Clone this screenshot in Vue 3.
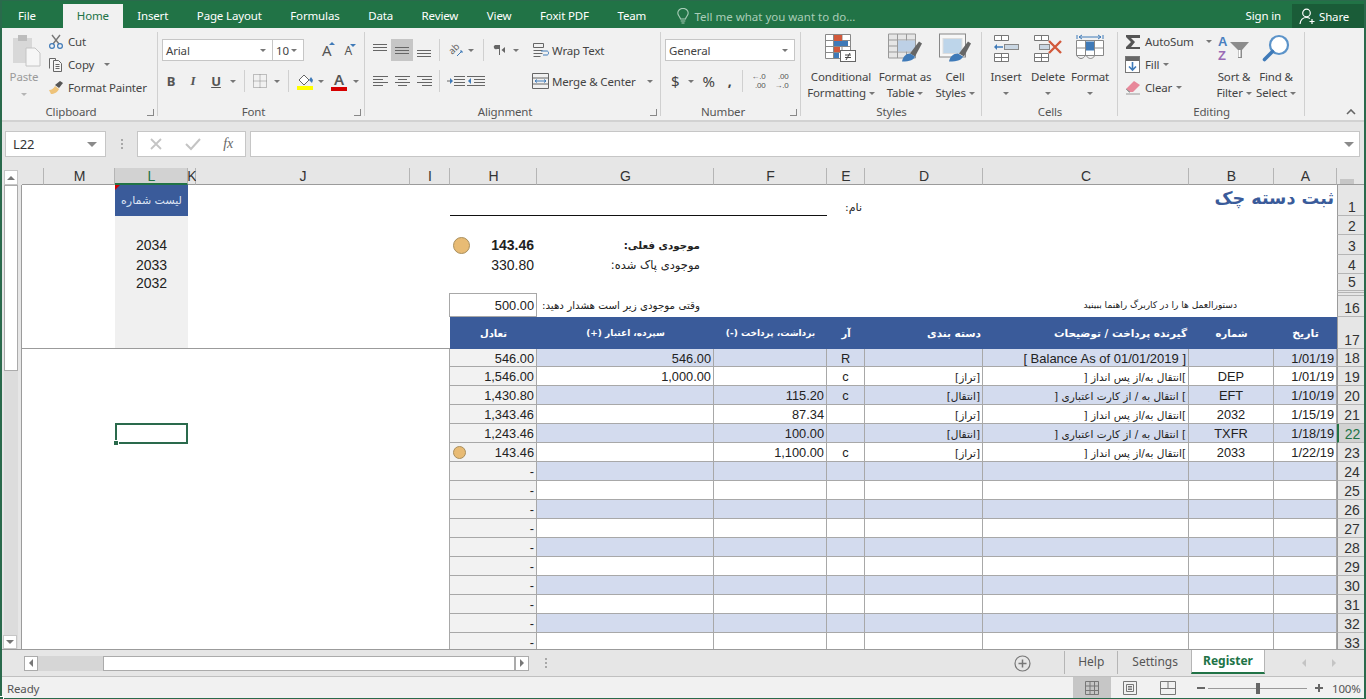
<template>
  <div class="excel">
    <header class="tabbar">
      <span
        v-for="t in tabs"
        :key="t"
        class="tab"
        :class="{ active: t === 'Home', file: t === 'File' }"
      >{{ t }}</span>
      <span class="tell">
        <svg width="12" height="17" viewBox="0 0 12 17" fill="none" stroke="#a9cdb8" stroke-width="1.1">
          <path d="M3.5 11C3 8.5.8 7.5.8 5a5.2 4.6 0 0 1 10.4 0c0 2.5-2.2 3.5-2.7 6zM3.7 13h4.6M4.5 15h3" />
        </svg>
        Tell me what you want to do...
      </span>
      <span class="signin">Sign in</span>
      <span class="share">
        <svg width="17" height="17" viewBox="0 0 17 17" fill="none" stroke="#fff" stroke-width="1.2">
          <circle cx="7.5" cy="5" r="3.8" />
          <path d="M1 16c.5-4 3-6.5 6.5-6.5 1.4 0 2.5.4 3.4 1M10.5 13.5h5M13 11v5" />
        </svg>
        Share
      </span>
    </header>

    <section class="ribbon">
      <!-- Clipboard -->
      <div class="group g-clip">
        <div class="body">
          <div class="paste">
            <svg width="30" height="33" viewBox="0 0 30 33">
              <rect x="1" y="4" width="19" height="25" fill="#d8d8d8" />
              <rect x="6" y="1" width="9" height="6" fill="#bdbdbd" />
              <path d="M14 14h9l5 5v13H14z" fill="#f6f6f6" stroke="#c4c4c4" />
            </svg>
            <span>Paste</span>
            <i class="caret dim" />
          </div>
          <div class="stack">
            <div class="tool">
              <svg width="16" height="15" viewBox="0 0 16 15" fill="none">
                <path d="M4 1l7 9M12 1L5 10" stroke="#777" stroke-width="1.4" />
                <circle cx="4" cy="12" r="2.4" stroke="#3f7ab8" stroke-width="1.2" />
                <circle cx="12" cy="12" r="2.4" stroke="#3f7ab8" stroke-width="1.2" />
              </svg>
              Cut
            </div>
            <div class="tool">
              <svg width="16" height="15" viewBox="0 0 16 15" fill="none" stroke="#666">
                <path d="M1.5 11.5v-10h6v2M5.5 3.5h5l3 3v8h-8z" fill="#f6f6f6" />
                <path d="M7.5 7.5h4M7.5 9.5h4M7.5 11.5h4" />
              </svg>
              Copy <i class="caret copy-caret" />
            </div>
            <div class="tool">
              <svg width="16" height="15" viewBox="0 0 16 15">
                <path d="M1 10c3 0 5-2 6-4l4 3c-1 3-5 5-8 5z" fill="#eec37a" />
                <path d="M7 5l5-4 3 2-4 5z" fill="#555" />
              </svg>
              Format Painter
            </div>
          </div>
        </div>
        <div class="glabel launchable">Clipboard<i class="launch" /></div>
      </div>

      <!-- Font -->
      <div class="group g-font">
        <div class="body two">
          <div class="trow">
            <div class="select fontname">Arial<i class="caret" /></div>
            <div class="select fontsize">10<i class="caret" /></div>
            <span class="growa big-a">A<i class="mini up" /></span>
            <span class="growa small-a">A<i class="mini down" /></span>
          </div>
          <div class="trow">
            <span class="ib fb">B</span>
            <span class="ib fi">I</span>
            <span class="ib fu">U</span>
            <i class="caret gap-r" />
            <i class="sep s-a" />
            <svg width="14" height="14" viewBox="0 0 14 14" fill="none" stroke="#888" stroke-dasharray="1 1">
              <path d="M.5.500h13v13H.5zM7 .5v13M.5 7h13" />
            </svg>
            <i class="caret c-border" />
            <i class="sep s-b" />
            <svg class="fill-ic" width="17" height="18" viewBox="0 0 17 18">
              <path d="M2 8l5-5 5 5-5 5z" fill="#fff" stroke="#666" />
              <path d="M12 8l3 3 1-3-2-3z" fill="#3f7ab8" />
              <rect y="14" width="16" height="4" fill="#ffff00" />
            </svg>
            <i class="caret c-fill" />
            <span class="color-a">A</span>
            <i class="caret c-color" />
          </div>
        </div>
        <div class="glabel launchable">Font<i class="launch" /></div>
      </div>

      <!-- Alignment -->
      <div class="group g-align">
        <div class="body">
          <div class="two alcol">
            <div class="trow">
              <span class="ab"><svg width="14" height="14" viewBox="0 0 14 14" stroke="#666"><path d="M0 1.500h14M0 4.500h14M0 7.500h14" /></svg></span>
              <span class="ab on"><svg width="14" height="14" viewBox="0 0 14 14" stroke="#666"><path d="M0 4.500h14M0 7.500h14M0 10.500h14" /></svg></span>
              <span class="ab"><svg width="14" height="14" viewBox="0 0 14 14" stroke="#666"><path d="M0 7.500h14M0 10.500h14M0 13.500h14" /></svg></span>
              <i class="sep s-c" />
              <svg class="orient" width="16" height="16" viewBox="0 0 16 16">
                <text x="2" y="11" transform="rotate(-45 6 8)" class="orient-t">ab</text>
                <path d="M10 14l5-5M13 9h2v2" stroke="#3f7ab8" fill="none" />
              </svg>
              <i class="caret c-or" />
              <i class="sep s-d" />
              <svg class="pil" width="13" height="12" viewBox="0 0 13 12">
                <path d="M2 1h5v10H6V5H4a2 2 0 0 1-2-4z" fill="#666" />
                <path d="M12 3L8.500 6l3.500 3z" fill="#666" />
              </svg>
              <i class="caret c-pil" />
            </div>
            <div class="trow">
              <span class="ab"><svg width="15" height="13" viewBox="0 0 15 13" stroke="#666"><path d="M0 1.500h15M0 4.500h10M0 7.500h15M0 10.500h10" /></svg></span>
              <span class="ab"><svg width="15" height="13" viewBox="0 0 15 13" stroke="#666"><path d="M0 1.500h15M3 4.500h9M0 7.500h15M3 10.500h9" /></svg></span>
              <span class="ab"><svg width="15" height="13" viewBox="0 0 15 13" stroke="#666"><path d="M0 1.500h15M5 4.500h10M0 7.500h15M5 10.500h10" /></svg></span>
              <i class="sep s-c" />
              <svg class="ind" width="18" height="13" viewBox="0 0 18 13">
                <path d="M7 1.500h11M7 4.500h11M7 7.500h11M7 10.500h11M0 6h5" stroke="#666" fill="none" />
                <path d="M3 3l3 3-3 3z" fill="#3f7ab8" />
              </svg>
              <svg class="ind2" width="18" height="13" viewBox="0 0 18 13">
                <path d="M0 1.500h18M7 4.500h11M7 7.500h11M0 10.500h18" stroke="#666" fill="none" />
                <path d="M4 3L1 6l3 3z" fill="#3f7ab8" />
              </svg>
            </div>
          </div>
          <div class="two wrapcol">
            <div class="trow">
              <svg width="17" height="17" viewBox="0 0 17 17" fill="none" stroke="#666">
                <path d="M1.500 1.500h10v4h-10zM1.500 8.500h9M1.500 11.500h9M1.500 14.500h7" />
                <path d="M9 9h6c2 0 2 4 0 4h-4" stroke="#3f7ab8" />
              </svg>
              Wrap Text
            </div>
            <div class="trow">
              <svg width="17" height="16" viewBox="0 0 17 16" fill="none" stroke="#666">
                <path d="M.5.500h16v15H.5zM.5 5h16M.5 11h16" />
                <path d="M3 8h11M5 6.500L3 8l2 1.500M12 6.500L14 8l-2 1.500" stroke="#3f7ab8" />
              </svg>
              Merge &amp; Center <i class="caret c-merge" />
            </div>
          </div>
        </div>
        <div class="glabel launchable">Alignment<i class="launch" /></div>
      </div>

      <!-- Number -->
      <div class="group g-num">
        <div class="body two">
          <div class="trow">
            <div class="select general">General<i class="caret" /></div>
          </div>
          <div class="trow numrow">
            <span class="dollar">$</span>
            <i class="caret c-dollar" />
            <span class="pct">%</span>
            <span class="comma">,</span>
            <i class="sep s-e" />
            <span class="dec"><b>←.0</b><b>.00</b></span>
            <span class="dec"><b>.00</b><b>→.0</b></span>
          </div>
        </div>
        <div class="glabel launchable">Number<i class="launch" /></div>
      </div>

      <!-- Styles -->
      <div class="group g-styles">
        <div class="body">
          <div class="big w-cond">
            <svg width="32" height="28" viewBox="0 0 32 28">
              <path d="M.5.500h25v24H.5zM8.500.500v24M17 .500v24M.5 6.500h25M.5 12.500h25M.5 18.500h25" fill="#fff" stroke="#888" />
              <rect x="9" y="1" width="8" height="6" fill="#d2593b" />
              <rect x="9" y="7" width="14" height="5" fill="#3f7ab8" />
              <rect x="9" y="13" width="6" height="5" fill="#d2593b" />
              <rect x="9" y="19" width="5" height="5" fill="#3f7ab8" />
              <rect x="15.500" y="16.500" width="15" height="11" fill="#fff" stroke="#666" />
              <path d="M20 21h6M20 23.500h6M25 19l-4 7" stroke="#444" fill="none" />
            </svg>
            <span>Conditional</span>
            <span>Formatting <i class="caret" /></span>
          </div>
          <div class="big w-table">
            <svg width="34" height="29" viewBox="0 0 34 29">
              <path d="M.5.500h27v24H.5zM9.500.500v24M18.500.500v24M.5 6.500h27M.5 12.500h27M.5 18.500h27" fill="#e6e6e6" stroke="#999" />
              <rect x="10" y="7" width="17" height="11" fill="#bdd0e6" />
              <path d="M22 20l9-12 3 2-7 13z" fill="#666" />
              <path d="M14 28c1-5 4-8 8-8l5 3c-1 3-5 5-13 5z" fill="#3f7ab8" />
            </svg>
            <span>Format as</span>
            <span>Table <i class="caret" /></span>
          </div>
          <div class="big w-cellst">
            <svg width="32" height="29" viewBox="0 0 32 29">
              <rect x=".5" y=".5" width="26" height="23" fill="#f7f7f7" stroke="#888" />
              <rect x="4" y="5" width="19" height="15" fill="#bdd5ea" stroke="#ddd" />
              <path d="M20 20l9-12 3 2-7 13z" fill="#666" />
              <path d="M10 28c1-5 4-8 9-8l5 3c-1 3-5 5-14 5z" fill="#3f7ab8" />
            </svg>
            <span>Cell</span>
            <span>Styles <i class="caret" /></span>
          </div>
        </div>
        <div class="glabel">Styles</div>
      </div>

      <!-- Cells -->
      <div class="group g-cells">
        <div class="body">
          <div class="big w-cell">
            <svg width="28" height="28" viewBox="0 0 28 28">
              <path d="M2.500 1.500h14v5h-14zM9.500 1.500v5M2.500 19.500h14v8h-14zM9.500 19.500v8M2.500 23.500h14" fill="#fff" stroke="#777" />
              <rect x="12.500" y="10.500" width="14" height="5" fill="#c9d6e2" stroke="#888" />
              <path d="M3 13h8" stroke="#3f7ab8" stroke-width="1.500" />
              <path d="M5 10l-3 3 3 3z" fill="#3f7ab8" />
            </svg>
            <span>Insert</span>
            <span><i class="caret" /></span>
          </div>
          <div class="big w-cell">
            <svg width="30" height="28" viewBox="0 0 30 28">
              <path d="M1.500 1.500h14v5h-14zM8.500 1.500v5M1.500 19.500h14v8h-14zM8.500 19.500v8M1.500 23.500h14" fill="#fff" stroke="#777" />
              <rect x="6.500" y="10.500" width="10" height="5" fill="#c9d6e2" stroke="#888" />
              <path d="M16 7l12 12M28 7L16 19" stroke="#d2593b" stroke-width="2.400" />
            </svg>
            <span>Delete</span>
            <span><i class="caret" /></span>
          </div>
          <div class="big w-cell">
            <svg width="28" height="28" viewBox="0 0 28 28">
              <path d="M.5 6.500h27v15H.5zM9.500 6.500v15M18.500 6.500v15M.5 14h27" fill="#fff" stroke="#888" />
              <rect x="10" y="7.500" width="8" height="9" fill="#3f7ab8" />
              <path d="M1 1v4M27 1v4M3 3h22M6 1L3 3l3 2M22 1l3 2-3 2" fill="none" stroke="#3f7ab8" />
              <path d="M.5 21.500c3 4 6 4 9 0M10 21.500c3 4 6 4 9 0" fill="none" stroke="#888" />
            </svg>
            <span>Format</span>
            <span><i class="caret" /></span>
          </div>
        </div>
        <div class="glabel">Cells</div>
      </div>

      <!-- Editing -->
      <div class="group g-edit">
        <div class="body">
          <div class="stack editstack">
            <div class="tool">
              <svg width="16" height="16" viewBox="0 0 16 16">
                <path d="M1 1h14v3H6l4 4-4 5h9v2H1v-2l5-5-5-5z" fill="#555" />
              </svg>
              AutoSum <i class="caret c-sum" />
            </div>
            <div class="tool">
              <svg width="16" height="17" viewBox="0 0 16 17">
                <rect x=".5" y=".5" width="14" height="16" fill="#fff" stroke="#777" />
                <rect x="1" y="1" width="13" height="4" fill="#666" />
                <path d="M7.500 6v8M4 10.500l3.500 3.500 3.500-3.500" fill="none" stroke="#3f7ab8" stroke-width="1.600" />
              </svg>
              Fill <i class="caret" />
            </div>
            <div class="tool">
              <svg width="16" height="15" viewBox="0 0 16 15">
                <path d="M1 9l8-8 6 4-7 7H4z" fill="#e8889a" />
                <path d="M1 9l4 3H4zM1 14h14" stroke="#999" fill="none" />
              </svg>
              Clear <i class="caret" />
            </div>
          </div>
          <div class="big w-cell">
            <svg class="sort-ic" width="32" height="28" viewBox="0 0 32 28">
              <text x="0" y="12" class="az a">A</text>
              <text x="0" y="26" class="az z">Z</text>
              <path d="M12 8h19l-7 8v8h-4v-8z" fill="#8c8c8c" />
              <path d="M20.500 16v7h2v-7" fill="#fff" />
            </svg>
            <span>Sort &amp;</span>
            <span>Filter <i class="caret" /></span>
          </div>
          <div class="big w-cell">
            <svg width="28" height="28" viewBox="0 0 28 28" fill="none">
              <circle cx="17" cy="11" r="9" stroke="#5b93c9" stroke-width="2.200" fill="#fff" />
              <path d="M10.500 17.500L2.500 25.500" stroke="#3f7ab8" stroke-width="3.600" stroke-linecap="round" />
            </svg>
            <span>Find &amp;</span>
            <span>Select <i class="caret" /></span>
          </div>
        </div>
        <div class="glabel">Editing</div>
      </div>

      <div class="collapse">
        <svg width="10" height="6" viewBox="0 0 10 6" fill="none" stroke="#666" stroke-width="1.600"><path d="M1 5l4-4 4 4" /></svg>
      </div>
    </section>

    <section class="fbar">
      <div class="namebox">L22<i class="caret wide" /></div>
      <div class="dots"><i /><i /><i /></div>
      <div class="fxbox">
        <svg width="14" height="14" viewBox="0 0 14 14" stroke="#c4c4c4" stroke-width="1.800" fill="none"><path d="M2 2l10 10M12 2L2 12" /></svg>
        <svg width="16" height="14" viewBox="0 0 16 14" stroke="#c4c4c4" stroke-width="2" fill="none"><path d="M1 7l5 5 9-10" /></svg>
        <span class="fx">fx</span>
      </div>
      <div class="finput"><i class="caret wide" /></div>
    </section>

    <section class="sheet">
      <aside class="vscroll">
        <div class="vbtn top"><i class="tri-up" /></div>
        <div class="vbody">
          <div class="vlane">
            <div class="vthumb" />
            <div class="vbtn bottom"><i class="tri-down" /></div>
          </div>
        </div>
      </aside>
      <div class="grid">
        <div
          v-for="c in cols"
          :key="'h' + c"
          class="colhead"
          :class="{ cur: c === 'L' }"
        >{{ c === 'N' ? '' : c }}</div>
        <div class="corner"><i /></div>

        <template v-for="r in rows" :key="r.n">
          <div
            v-for="c in cols"
            :key="r.n + c"
            class="cell"
            :class="cellClass(r, c)"
          >
            <i v-if="r.cells[c] && r.cells[c].dot" class="dot" :class="r.cells[c].dot" />
            <span v-if="r.cells[c]">{{ r.cells[c].t }}</span>
          </div>
          <div class="rowhead" :class="{ cur: r.n === 22, tall: r.n === 16 }">{{ r.label }}</div>
        </template>
      </div>
    </section>

    <section class="bottombar">
      <div class="hbtn first"><i class="tri-left" /></div>
      <div class="htrack" />
      <div class="hthumb" />
      <div class="hbtn"><i class="tri-right" /></div>
      <div class="dots h"><i /><i /><i /></div>
      <div class="plus">
        <svg width="17" height="17" viewBox="0 0 17 17" fill="none" stroke="#777" stroke-width="1.200">
          <circle cx="8.500" cy="8.500" r="7.500" />
          <path d="M4.500 8.500h8M8.500 4.500v8" stroke-width="1.500" />
        </svg>
      </div>
      <div class="stab help">Help</div>
      <div class="stab settings">Settings</div>
      <div class="stab on">Register</div>
      <div class="tabnav"><i class="tri-left faint" /><i class="tri-right faint" /></div>
    </section>

    <footer class="status">
      <span class="ready">Ready</span>
      <div class="view on">
        <svg width="14" height="14" viewBox="0 0 14 14" fill="none" stroke="#777"><path d="M.5.500h13v13H.5zM5 .5v13M9.500.500v13M.5 5h13M.5 9.500h13" /></svg>
      </div>
      <div class="view">
        <svg width="14" height="14" viewBox="0 0 14 14" fill="none" stroke="#777"><path d="M.5.500h13v13H.5zM3.500 3.500h7v7h-7zM5 5.500h4M5 7h4M5 8.500h4" /></svg>
      </div>
      <div class="view">
        <svg width="16" height="14" viewBox="0 0 16 14" fill="none" stroke="#777"><path d="M.5.500h15v13H.5zM8 .5v7M.5 7.500h15" /></svg>
      </div>
      <span class="zbtn minus" />
      <div class="zline"><i /></div>
      <span class="zbtn plusz" />
      <span class="zoom">100%</span>
    </footer>
  </div>
</template>

<script setup>
const tabs = [
  "File",
  "Home",
  "Insert",
  "Page Layout",
  "Formulas",
  "Data",
  "Review",
  "View",
  "Foxit PDF",
  "Team",
];

const cols = ["N", "M", "L", "K", "J", "I", "H", "G", "F", "E", "D", "C", "B", "A"];
const tableCols = ["H", "G", "F", "E", "D", "C", "B", "A"];

const savings = "]انتقال به/از پس انداز [";
const card = "] انتقال به / از کارت اعتباری [";
const balance = "[تراز]";
const transfer = "[انتقال]";

// sheet rows that sit above the table, heights come from the css grid
const topRows = [
  {
    n: 1,
    label: "1",
    cells: {
      L: { t: "لیست شماره", c: "listhead fa" },
      H: { t: "", c: "under" },
      G: { t: "", c: "under" },
      F: { t: "", c: "under" },
      E: { t: "نام:", c: "name fa" },
      A: { t: "ثبت دسته چک", c: "title fa" },
    },
  },
  { n: 2, label: "2", cells: { L: { t: "", c: "list" } } },
  {
    n: 3,
    label: "3",
    cells: {
      L: { t: "2034", c: "list big-n center" },
      H: { t: "143.46", c: "big-n bold num", dot: "large" },
      G: { t: "موجودی فعلی:", c: "fa bold lbl current" },
    },
  },
  {
    n: 4,
    label: "4",
    cells: {
      L: { t: "2033", c: "list big-n center" },
      H: { t: "330.80", c: "big-n num" },
      G: { t: "موجودی پاک شده:", c: "fa lbl cleared" },
    },
  },
  {
    n: 5,
    label: "5",
    cells: { L: { t: "2032", c: "list big-n center" } },
  },
  { n: 6, label: "", cells: { L: { t: "", c: "list" } } },
  {
    n: 16,
    label: "16",
    cells: {
      L: { t: "", c: "list" },
      H: { t: "500.00", c: "num box" },
      G: { t: "وقتی موجودی زیر است هشدار دهید:", c: "fa lbl warn" },
      B: { t: "دستورالعمل ها را در کاربرگ راهنما ببینید", c: "fa inst" },
    },
  },
  {
    n: 17,
    label: "17",
    cells: {
      L: { t: "", c: "list" },
      H: { t: "تعادل", c: "th fa" },
      G: { t: "سپرده، اعتبار (+)", c: "th fa tight" },
      F: { t: "برداشت، پرداخت (-)", c: "th fa tight" },
      E: { t: "آر", c: "th fa" },
      D: { t: "دسته بندی", c: "th fa toright" },
      C: { t: "گیرنده پرداخت / توضیحات", c: "th fa toright" },
      B: { t: "شماره", c: "th fa" },
      A: { t: "تاریخ", c: "th fa wide-t" },
    },
  },
];

// A to H, same order as the sheet reads
const records = [
  { n: 18, A: "1/01/19", C: "[ Balance As of 01/01/2019 ]", E: "R", G: "546.00", H: "546.00" },
  { n: 19, A: "1/01/19", B: "DEP", C: savings, D: balance, E: "c", G: "1,000.00", H: "1,546.00" },
  { n: 20, A: "1/10/19", B: "EFT", C: card, D: transfer, E: "c", F: "115.20", H: "1,430.80" },
  { n: 21, A: "1/15/19", B: "2032", C: savings, D: balance, F: "87.34", H: "1,343.46" },
  { n: 22, A: "1/18/19", B: "TXFR", C: card, D: transfer, F: "100.00", H: "1,243.46" },
  { n: 23, A: "1/22/19", B: "2033", C: savings, D: balance, E: "c", F: "1,100.00", H: "143.46" },
];

const kinds = { A: "num", B: "center", C: "desc", D: "desc", E: "center", F: "num", G: "num", H: "num" };

const dataRows = [];
for (let n = 18; n <= 33; n++) {
  const rec = records.find((r) => r.n === n) || { n, H: "-" };
  const cells = {};
  tableCols.forEach((c) => {
    const t = rec[c] || "";
    const isFa = /[\u0600-\u06ff]/.test(t);
    cells[c] = { t, c: kinds[c] + (isFa ? " fa" : "") };
  });
  if (n === 23) cells.H.dot = "small";
  dataRows.push({ n, label: String(n), cells, band: n % 2 === 0 });
}

const rows = [...topRows, ...dataRows];

const cellClass = (r, c) => {
  const spec = r.cells[c];
  const out = spec ? [spec.c] : [];
  if (r.n >= 18) {
    if (tableCols.includes(c)) out.push("td");
    if (c === "H") out.push("bal");
    else if (r.band && tableCols.includes(c)) out.push("band");
    if (c === "I") out.push("edge");
    if (c === "L" && r.n === 22) out.push("active");
  }
  if (r.n === 17 && !tableCols.includes(c)) out.push("freeze");
  return out;
};
</script>

<style>
html,
body {
  margin: 0;
  background: #f1f1f1;
}
</style>

<style scoped>
.excel {
  width: 1366px;
  height: 699px;
  overflow: hidden;
  font-family: "Noto Sans", "Open Sans", sans-serif;
  font-size: 11.5px;
  letter-spacing: -0.15px;
  color: #444;
  background: #e6e6e6;
}

/* title tabs */
.tabbar {
  height: 28px;
  display: flex;
  align-items: flex-end;
  background: #217346;
  color: #fff;
}
.tab {
  height: 24px;
  line-height: 23px;
  padding: 0 14.3px;
}
.tab.file {
  padding: 0 27px 0 18px;
}
.tab.active {
  padding: 0 14px;
  background: #f1f1f1;
  color: #217346;
}
.tell {
  margin-left: 17px;
  height: 24px;
  line-height: 23px;
  display: flex;
  align-items: center;
  gap: 5px;
  letter-spacing: 0;
  color: #a9cdb8;
}
.signin {
  margin-left: auto;
  height: 24px;
  line-height: 23px;
}
.share {
  margin-left: 11px;
  width: 74px;
  height: 24px;
  box-sizing: border-box;
  padding-left: 7px;
  display: flex;
  align-items: center;
  gap: 3px;
  background: #1a5c38;
}

/* ribbon */
.ribbon {
  height: 92px;
  display: flex;
  background: #f1f1f1;
  border-bottom: 2px solid #d2d2d2;
}
.group {
  position: relative;
  display: flex;
  flex-direction: column;
  flex: none;
}
.group::after {
  content: "";
  position: absolute;
  right: 0;
  top: 4px;
  bottom: 4px;
  width: 1px;
  background: #d0d0d0;
}
.g-clip { width: 158px; }
.g-font { width: 207px; }
.g-align { width: 296px; }
.g-num { width: 140px; }
.g-styles { width: 181px; }
.g-cells { width: 136px; }
.g-edit { width: 187px; }
.body {
  height: 76px;
  display: flex;
  box-sizing: border-box;
}
.two {
  display: flex;
  flex-direction: column;
  padding-top: 11px;
  gap: 9px;
}
.trow {
  height: 22px;
  display: flex;
  align-items: center;
}
.glabel {
  height: 16px;
  line-height: 16px;
  text-align: center;
  color: #555;
}
.glabel.launchable {
  padding-right: 16px;
}
.launch {
  position: absolute;
  right: 4px;
  bottom: 4px;
  width: 6px;
  height: 6px;
  border-left: 1px solid #888;
  border-bottom: 1px solid #888;
  transform: scaleX(-1);
}
.caret {
  display: inline-block;
  flex: none;
  width: 0;
  height: 0;
  border-left: 3px solid transparent;
  border-right: 3px solid transparent;
  border-top: 3px solid #777;
  vertical-align: middle;
}
.caret.dim {
  border-top-color: #b5b5b5;
}
.caret.wide {
  border-left-width: 5px;
  border-right-width: 5px;
  border-top-width: 5px;
  border-top-color: #8a8a8a;
}
.sep {
  flex: none;
  width: 1px;
  height: 22px;
  background: #d0d0d0;
}

/* clipboard */
.paste {
  width: 48px;
  padding-top: 6px;
  display: flex;
  flex-direction: column;
  align-items: center;
  color: #9a9a9a;
}
.paste svg {
  margin-left: 5px;
}
.paste span {
  margin-top: 2px;
}
.paste .caret {
  margin-top: 9px;
}
.stack {
  padding-top: 2px;
  color: #444;
}
.tool {
  height: 23px;
  display: flex;
  align-items: center;
  gap: 4px;
  white-space: nowrap;
}
.tool svg {
  flex: none;
}
.copy-caret {
  margin-left: 6px;
}

/* font */
.g-font .two {
  padding-left: 2px;
}
.select {
  height: 22px;
  box-sizing: border-box;
  display: flex;
  align-items: center;
  justify-content: space-between;
  padding: 0 6px 0 3px;
  background: #fff;
  border: 1px solid #c6c6c6;
}
.fontname {
  width: 111px;
  margin-left: 2px;
}
.fontsize {
  width: 32px;
  margin-left: -1px;
}
.growa {
  position: relative;
  color: #555;
}
.big-a {
  margin-left: 18px;
  font-size: 15px;
}
.small-a {
  margin-left: 13px;
  font-size: 12px;
}
.mini {
  position: absolute;
  top: 2px;
  right: -4px;
  border-left: 3px solid transparent;
  border-right: 3px solid transparent;
}
.mini.up {
  border-bottom: 3px solid #3f7ab8;
}
.mini.down {
  border-top: 3px solid #3f7ab8;
}
.ib {
  width: 22px;
  text-align: center;
  font-size: 13px;
  color: #555;
}
.fb {
  font-weight: 700;
}
.fi {
  font-style: italic;
  font-family: "Liberation Serif", serif;
  font-weight: 700;
}
.fu {
  font-weight: 700;
  text-decoration: underline;
  margin-left: 1px;
}
.gap-r {
  margin-left: 3px;
}
.s-a {
  margin: 0 8px 0 8px;
}
.c-border {
  margin-left: 7px;
}
.s-b {
  margin: 0 8px 0 8px;
}
.fill-ic {
  flex: none;
}
.c-fill {
  margin-left: 4px;
}
.color-a {
  width: 16px;
  margin-left: 7px;
  text-align: center;
  font-size: 15px;
  line-height: 15px;
  font-weight: 600;
  color: #555;
  border-bottom: 4px solid #d60000;
}
.c-color {
  margin-left: 6px;
}

/* alignment */
.alcol {
  width: 164px;
  padding-left: 4px;
  box-sizing: border-box;
}
.ab {
  flex: none;
  width: 22px;
  height: 22px;
  display: flex;
  align-items: center;
  justify-content: center;
}
.ab.on {
  background: #c6c6c6;
}
.s-c {
  margin: 0 7px 0 4px;
}
.orient {
  flex: none;
  overflow: visible;
}
.orient-t {
  font-size: 9.5px;
  fill: #666;
}
.c-or {
  margin-left: 5px;
}
.s-d {
  margin: 0 9px 0 9px;
}
.c-pil {
  margin-left: 7px;
}
.ind2 {
  margin-left: 2px;
}
.wrapcol {
  padding-left: 3px;
}
.wrapcol .trow {
  gap: 3px;
  white-space: nowrap;
}
.c-merge {
  margin-left: 8px;
}

/* number */
.g-num .two {
  padding-left: 4px;
}
.general {
  width: 130px;
}
.dollar {
  margin-left: 6px;
  font-size: 15px;
}
.c-dollar {
  margin-left: 9px;
}
.pct {
  margin-left: 8px;
  font-size: 15px;
}
.comma {
  margin-left: 13px;
  font-size: 14px;
  font-weight: 700;
  line-height: 12px;
}
.s-e {
  margin: 0 8px 0 10px;
}
.dec {
  width: 15px;
  margin-right: 8px;
  font-family: "Liberation Sans", sans-serif;
  font-size: 8px;
  color: #555;
  display: flex;
  flex-direction: column;
  align-items: flex-end;
}
.dec b {
  height: 9.5px;
  line-height: 9.5px;
  font-weight: 400;
  white-space: nowrap;
}

/* big buttons */
.big {
  flex: none;
  display: flex;
  flex-direction: column;
  align-items: center;
  padding-top: 5px;
  white-space: nowrap;
}
.big svg {
  height: 30px;
  margin-bottom: 6px;
}
.big svg.sort-ic {
  overflow: visible;
}
.big span {
  height: 16px;
  line-height: 16px;
}
.g-styles .body {
  padding-left: 7px;
}
.w-cond { width: 66px; }
.w-table { width: 62px; }
.w-cellst { width: 38px; }
.g-cells .body {
  padding-left: 3px;
}
.w-cell { width: 42px; }
.editstack {
  width: 95px;
  padding-left: 7px;
  box-sizing: border-box;
}
.az {
  font-family: "Liberation Sans", sans-serif;
  font-size: 13px;
  font-weight: 700;
}
.az.a {
  fill: #4a7fc0;
}
.az.z {
  fill: #9a6bb5;
}
.c-sum {
  margin-left: 8px;
}
.collapse {
  flex: 1;
  display: flex;
  align-items: flex-end;
  justify-content: flex-end;
  padding: 0 10px 5px 0;
}

/* formula bar */
.fbar {
  height: 46px;
  box-sizing: border-box;
  padding: 9px 6px 11px 5px;
  display: flex;
  background: #e6e6e6;
}
.namebox {
  width: 101px;
  box-sizing: border-box;
  padding: 0 8px 0 7px;
  display: flex;
  align-items: center;
  justify-content: space-between;
  background: #fff;
  border: 1px solid #c6c6c6;
  color: #333;
  font-size: 13px;
}
.dots {
  width: 31px;
  display: flex;
  flex-direction: column;
  align-items: center;
  justify-content: center;
  gap: 2px;
}
.dots i {
  width: 2px;
  height: 2px;
  background: #a8a8a8;
}
.fxbox {
  width: 109px;
  box-sizing: border-box;
  padding: 0 12px 0 11px;
  display: flex;
  align-items: center;
  justify-content: space-between;
  background: #fff;
  border: 1px solid #c6c6c6;
}
.fx {
  font-family: "Liberation Serif", serif;
  font-style: italic;
  font-size: 14px;
  color: #666;
}
.finput {
  flex: 1;
  margin-left: 4px;
  display: flex;
  align-items: center;
  justify-content: flex-end;
  padding-right: 5px;
  background: #fff;
  border: 1px solid #c6c6c6;
}

/* sheet */
.sheet {
  height: 481px;
  display: flex;
  background: #fff;
}
.vscroll {
  width: 22px;
  flex: none;
  display: flex;
  flex-direction: column;
  background: #e6e6e6;
}
.vbody {
  flex: 1;
  border-right: 1px solid #9b9b9b;
  min-height: 0;
}
.vlane {
  height: 100%;
  width: 14px;
  margin-left: 4px;
  display: flex;
  flex-direction: column;
  background: #dcdcdc;
}
.vthumb {
  height: 186px;
  box-sizing: border-box;
  background: #fff;
  border: 1px solid #ababab;
}
.vbtn {
  box-sizing: border-box;
  width: 14px;
  display: flex;
  align-items: center;
  justify-content: center;
  background: #fff;
  border: 1px solid #c6c6c6;
}
.vbtn.top {
  height: 15px;
  margin: 2px 0 0 4px;
  flex: none;
}
.vbtn.bottom {
  height: 14px;
  margin: auto 0 0 -1px;
}
.tri-up,
.tri-down,
.tri-left,
.tri-right {
  width: 0;
  height: 0;
  display: block;
  border: 4px solid transparent;
}
.tri-up {
  border-top: 0;
  border-bottom: 4px solid #777;
}
.tri-down {
  border-bottom: 0;
  border-top: 4px solid #777;
}
.tri-left {
  border-left: 0;
  border-right: 4px solid #777;
}
.tri-right {
  border-right: 0;
  border-left: 4px solid #777;
}
.grid {
  flex: 1;
  min-width: 0;
  overflow: hidden;
  display: grid;
  grid-template-columns: 22px 71px 73px 8px 214px 40px 87px 177px 113px 38px 118px 206px 85px 63px 29px;
  grid-template-rows: 17px 31px 19px 20px 19px 17px 2px 24px 32px 18px repeat(15, 19px);
  font-family: "Liberation Sans", "DejaVu Sans", sans-serif;
  font-size: 12.8px;
  letter-spacing: 0;
  color: #222;
}
.colhead {
  box-sizing: border-box;
  display: flex;
  align-items: center;
  justify-content: center;
  padding-left: 1px;
  background: #e6e6e6;
  border-right: 1px solid #b5b5b5;
  border-bottom: 1px solid #9b9b9b;
  font-size: 14px;
  color: #333;
  overflow: visible;
}
.colhead.cur {
  background: #d2d2d2;
  color: #217346;
  border-bottom: 2px solid #217346;
}
.corner {
  box-sizing: border-box;
  display: flex;
  align-items: flex-end;
  padding-left: 3px;
  background: #e6e6e6;
  border-bottom: 1px solid #9b9b9b;
}
.corner i {
  width: 14px;
  height: 5px;
  background: #c6c6c6;
}
.rowhead {
  box-sizing: border-box;
  display: flex;
  align-items: flex-end;
  justify-content: center;
  background: #e6e6e6;
  border-left: 1px solid #9b9b9b;
  border-bottom: 1px solid #b5b5b5;
  font-size: 14px;
  line-height: 16px;
  color: #333;
}
.rowhead.tall {
  background: linear-gradient(#b5b5b5, #b5b5b5) 0 2px / 100% 1px no-repeat, #e6e6e6;
}
.rowhead.cur {
  background: #d2d2d2;
  color: #217346;
  border-left: 2px solid #217346;
}
.cell {
  position: relative;
  box-sizing: border-box;
  min-width: 0;
  display: flex;
  align-items: center;
  justify-content: flex-end;
  white-space: nowrap;
  background: #fff;
}
.cell span {
  flex: none;
}
.fa {
  font-family: "DejaVu Sans", sans-serif;
}
.fa > span {
  direction: rtl;
}
.num {
  padding-right: 3px;
}
.center {
  justify-content: center;
}
.bold {
  font-weight: 700;
}
.big-n {
  font-size: 14px;
}
.td {
  padding-top: 1px;
  border-right: 1px solid #a8a8a8;
  border-bottom: 1px solid #a8a8a8;
}
.td.num {
  padding-right: 2px;
}
.edge {
  border-right: 1px solid #a8a8a8;
}
.band {
  background: #d3dbee;
}
.bal {
  background: #f2f2f2;
}
.desc {
  padding-right: 2px;
  font-size: 10.5px;
}
.desc:not(.fa) {
  font-size: 13px;
}
.under {
  border-bottom: 1px solid #111;
}
.title {
  padding: 3px 3px 0 0;
  font-size: 17.6px;
  font-weight: 700;
  color: #3a5b9a;
  align-items: flex-start;
}
.name {
  font-size: 11px;
  padding: 0 3px 2px 0;
  align-items: flex-end;
}
.listhead {
  justify-content: center;
  background: #3a5b9a;
  color: #dfe6f5;
  font-size: 11px;
}
.listhead::before {
  content: "";
  position: absolute;
  left: 0;
  top: 0;
  border-top: 5px solid #d00000;
  border-right: 5px solid transparent;
}
.list {
  background: #f0f0f0;
}
.lbl {
  padding-right: 14px;
}
.lbl.current {
  font-size: 10.3px;
}
.lbl.cleared {
  font-size: 11.5px;
}
.lbl.warn {
  font-size: 10.3px;
}
.box {
  border: 1px solid #a8a8a8;
  margin-left: -1px;
  padding-right: 2px;
}
.inst {
  padding-right: 37px;
  font-size: 9.1px;
}
.th {
  justify-content: center;
  background: #3a5b9a;
  color: #fff;
  font-size: 10px;
  font-weight: 700;
}
.th.tight {
  font-size: 9px;
}
.th.toright {
  justify-content: flex-end;
  padding-right: 2px;
  font-size: 10.5px;
}
.th.wide-t {
  font-size: 11px;
}
.freeze {
  border-bottom: 1px solid #9b9b9b;
}
.dot {
  position: absolute;
  border-radius: 50%;
  background: #e8bb74;
  box-sizing: border-box;
  border: 1px solid #a98f5e;
}
.dot.large {
  left: 3px;
  top: 2px;
  width: 17px;
  height: 17px;
}
.dot.small {
  left: 3px;
  top: 3px;
  width: 13px;
  height: 13px;
}
.active {
  z-index: 1;
}
.active::before {
  content: "";
  position: absolute;
  inset: -1px 0;
  border: 2px solid #2a6a4c;
}
.active::after {
  content: "";
  position: absolute;
  left: -2px;
  bottom: -3px;
  width: 6px;
  height: 6px;
  background: #2a6a4c;
  border: 1px solid #fff;
  box-sizing: border-box;
}

/* sheet tabs + horizontal scrollbar */
.bottombar {
  height: 28px;
  box-sizing: border-box;
  display: flex;
  align-items: center;
  padding-left: 24px;
  border-top: 1px solid #9b9b9b;
  border-bottom: 1px solid #c0c0c0;
  background: #e6e6e6;
  color: #555;
}
.hbtn {
  box-sizing: border-box;
  width: 14px;
  height: 15px;
  display: flex;
  align-items: center;
  justify-content: center;
  background: #fff;
  border: 1px solid #ababab;
}
.htrack {
  width: 65px;
  height: 15px;
  background: #d6d6d6;
}
.hthumb {
  box-sizing: border-box;
  width: 412px;
  height: 15px;
  background: #fff;
  border: 1px solid #ababab;
}
.dots.h {
  width: 34px;
}
.plus {
  margin-left: auto;
  margin-right: 33px;
  width: 17px;
  height: 17px;
}
.stab {
  height: 23px;
  line-height: 22px;
  padding: 0 13px;
  font-size: 12px;
  letter-spacing: 0;
  align-self: flex-start;
  margin-top: 1px;
  border-left: 1px solid #b5b5b5;
  color: #555;
}
.stab.settings {
  padding: 0 13px 0 14px;
}
.stab.on {
  height: 24px;
  margin-top: 0;
  width: 74px;
  padding: 0;
  text-align: center;
  color: #217346;
  font-weight: 700;
  background: #fff;
  border-left: 1px solid #b5b5b5;
  border-right: 1px solid #b5b5b5;
  border-bottom: 2px solid #217346;
  box-sizing: border-box;
}
.tabnav {
  box-sizing: border-box;
  width: 101px;
  padding-left: 37px;
  display: flex;
  gap: 26px;
}
.faint {
  opacity: 0.3;
}

/* status bar */
.status {
  height: 22px;
  display: flex;
  align-items: center;
  background: #f1f1f1;
  color: #555;
}
.ready {
  margin-left: 7px;
  margin-right: auto;
}
.view {
  width: 38px;
  height: 22px;
  display: flex;
  align-items: center;
  justify-content: center;
}
.view.on {
  background: #c6c6c6;
}
.zbtn {
  position: relative;
  width: 8px;
  height: 2px;
  background: #666;
  margin-left: 10px;
}
.plusz::after {
  content: "";
  position: absolute;
  left: 3px;
  top: -3px;
  width: 2px;
  height: 8px;
  background: #666;
}
.zline {
  position: relative;
  width: 99px;
  height: 1px;
  margin-left: 3px;
  margin-right: -2px;
  background: #999;
}
.zline i {
  position: absolute;
  left: 48px;
  top: -5px;
  width: 4px;
  height: 11px;
  background: #666;
}
.zoom {
  width: 34px;
  margin-left: 9px;
  text-align: left;
}
</style>
